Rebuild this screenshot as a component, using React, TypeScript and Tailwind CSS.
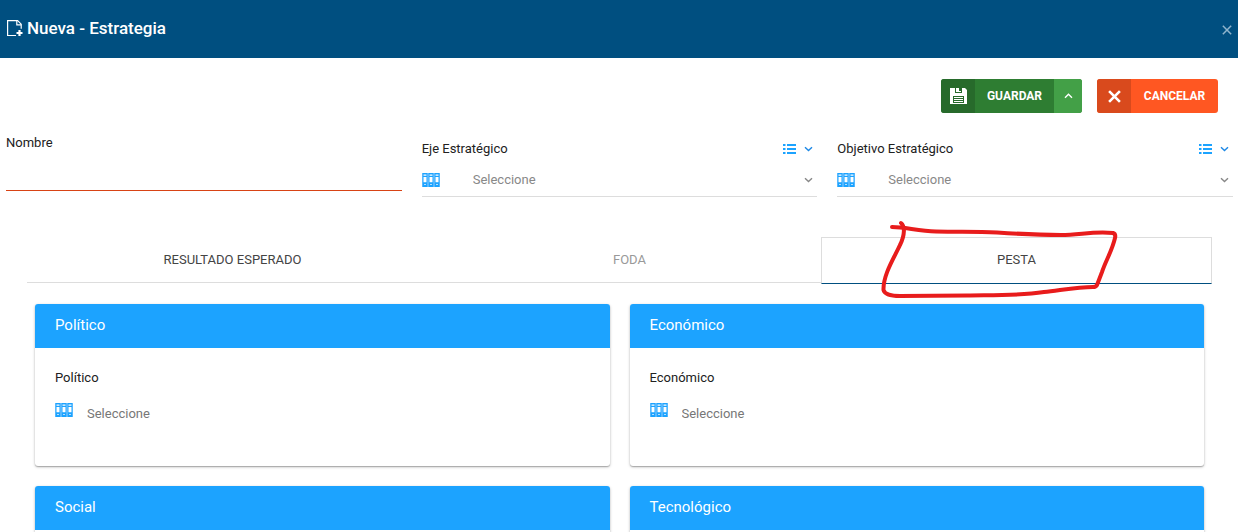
import type { ReactNode } from "react";

function FilePlusIcon() {
  return (
    <svg width="17" height="17" viewBox="0 0 17 17" fill="none" stroke="white" aria-hidden="true">
      <path d="M9 15.5H.6V.6h10l3.6 3.6v4.6" strokeWidth="1.2" />
      <path d="M9.8.6v4.2h4.4" strokeWidth="1.2" />
      <path d="M12.5 10v6M9.5 13h6" strokeWidth="2.2" />
    </svg>
  );
}

function CloseIcon({ size, width }: { size: number; width: number }) {
  return (
    <svg width={size} height={size} viewBox="0 0 12 12" stroke="currentColor" strokeWidth={width} aria-hidden="true">
      <path d="M1 1l10 10M11 1L1 11" />
    </svg>
  );
}

function SaveIcon() {
  return (
    <svg width="17" height="16" viewBox="0 0 17 16" aria-hidden="true">
      <path fillRule="evenodd" fill="white" d="M0 0h15l2 2v14H0zM5 0v5h7V0zM3 8v7h11V8z" />
      <path fill="white" d="M6 0h3v4H6zM9 3h2v1H9zM4 9h9v1H4zM4 11h9v1H4zM4 13h9v1H4z" />
    </svg>
  );
}

function Chevron({ up = false }: { up?: boolean }) {
  return (
    <svg width="9" height="6" viewBox="0 0 9 6" fill="none" stroke="currentColor" strokeWidth="1.4" aria-hidden="true">
      <path d={up ? "M1 4.7l3.5-3.4L8 4.7" : "M1 1.2l3.5 3.4L8 1.2"} />
    </svg>
  );
}

function ListIcon() {
  return (
    <svg width="13" height="10" viewBox="0 0 13 10" fill="currentColor" aria-hidden="true">
      <path d="M0 0h2.5v2H0zM4 0h9v2H4zM0 4h2.5v2H0zM4 4h9v2H4zM0 8h2.5v2H0zM4 8h9v2H4z" />
    </svg>
  );
}

function BindersIcon() {
  return (
    <svg width="18" height="14" viewBox="0 0 18 14" className="shrink-0" aria-hidden="true">
      {[0, 6, 12].map((x) => (
        <g key={x} transform={`translate(${x} 0)`}>
          <rect width="6" height="14" fill="#7cc7ff" />
          <path fill="#1ca3ff" d="M.6 0h4.8v14H.6z" />
          <path fill="white" d="M1.5 1.5h3v1.3h-3zM1.5 4h3v5.2h-3z" />
          <path fill="#b5dfff" d="M2 11h2v1H2z" />
        </g>
      ))}
    </svg>
  );
}

function SelectField({ id, label }: { id: string; label: string }) {
  return (
    <div>
      <div className="flex h-8 items-center justify-between">
        <label htmlFor={id}>{label}</label>
        <div className="flex items-center gap-2 pr-1 text-[#1ca3ff]">
          <button type="button" aria-label={`Listado de ${label}`}>
            <ListIcon />
          </button>
          <button type="button" aria-label={`Opciones de ${label}`} className="text-[#1e88e5]">
            <Chevron />
          </button>
        </div>
      </div>
      <div className="relative flex h-8 items-center border-b border-[#dddddd] pb-[2px]">
        <BindersIcon />
        <select id={id} className="h-7 min-w-0 flex-1 appearance-none bg-transparent pl-[33px] text-[#888888] outline-none">
          <option>Seleccione</option>
        </select>
        <span className="pointer-events-none absolute right-1 text-[#888888]">
          <Chevron />
        </span>
      </div>
    </div>
  );
}

function Card({ title }: { title: string }) {
  return (
    <section className="overflow-hidden rounded-[3px] bg-white shadow-[0_1px_3px_rgba(0,0,0,0.25),0_1px_1px_rgba(0,0,0,0.2)]">
      <h2 className="h-11 bg-[#1ca3ff] px-5 text-[15px] leading-[42px] font-normal text-white">{title}</h2>
      <div className="flex h-[118px] flex-col px-5 pt-5">
        <label htmlFor={title} className="leading-5">
          {title}
        </label>
        <div className="mt-[15px] flex items-start gap-[14px]">
          <BindersIcon />
          <input
            id={title}
            placeholder="Seleccione"
            className="h-5 min-w-0 flex-1 bg-transparent outline-none placeholder:text-[#777777]"
          />
        </div>
      </div>
    </section>
  );
}

function Tab({ className, children, selected = false }: { className: string; children: ReactNode; selected?: boolean }) {
  return (
    <button type="button" role="tab" aria-selected={selected} className={className}>
      {children}
    </button>
  );
}

export default function App() {
  return (
    <div className="flex h-screen flex-col overflow-hidden bg-white font-['Roboto',sans-serif] text-[13px] text-[#444444]">
      <header className="flex h-[58px] shrink-0 items-center justify-between bg-[#004f80] pr-[6px] pb-[2px] pl-[7px] text-white">
        <h1 className="flex items-center gap-[3px] text-[17px] leading-6 font-medium">
          <FilePlusIcon />
          Nueva - Estrategia
        </h1>
        <button type="button" aria-label="Cerrar" className="pt-1 text-[#8fb4cc]">
          <CloseIcon size={10} width={1.8} />
        </button>
      </header>

      <main className="min-h-0 flex-1">
        <div className="flex justify-end gap-[15px] pt-[21px] pr-5 text-[12px] font-bold text-white">
          <div className="flex h-[34px] overflow-hidden rounded-[3px] bg-[#2e7d32]">
            <button type="button" className="flex">
              <span className="flex h-[34px] w-[34px] items-center justify-center bg-[#276a2b]">
                <SaveIcon />
              </span>
              <span className="w-[79px] text-center leading-[34px]">GUARDAR</span>
            </button>
            <button type="button" aria-label="Más opciones" className="flex w-7 items-center justify-center bg-[#43a047]">
              <Chevron up />
            </button>
          </div>
          <button type="button" className="flex h-[34px] overflow-hidden rounded-[3px] bg-[#ff5722]">
            <span className="flex h-[34px] w-[34px] items-center justify-center bg-[#d94a1d]">
              <CloseIcon size={13} width={2.4} />
            </span>
            <span className="w-[87px] text-center leading-[34px]">CANCELAR</span>
          </button>
        </div>

        <form className="grid grid-cols-3 items-start gap-5 pt-5 pr-[5px] pl-[6px] text-[#212121]">
          <div className="flex flex-col">
            <label htmlFor="nombre" className="leading-5">
              Nombre
            </label>
            <input id="nombre" className="h-[38px] w-full border-b border-[#d84315] bg-transparent outline-none" />
          </div>
          <SelectField id="eje" label="Eje Estratégico" />
          <SelectField id="objetivo" label="Objetivo Estratégico" />
        </form>

        <div role="tablist" className="mt-10 mr-[26px] ml-[27px] flex h-[47px] items-start">
          <Tab className="h-[46px] flex-[411] border-b border-[#dddddd]">RESULTADO ESPERADO</Tab>
          <Tab className="h-[46px] flex-[383] border-b border-[#dddddd] text-[#999999]">FODA</Tab>
          <Tab
            selected
            className="relative h-[47px] flex-[389] border border-[#dddddd] border-b-[#004f80] pb-[2px]"
          >
            PESTA
            <svg
              className="pointer-events-none absolute top-[-18px] left-[54px]"
              width="250"
              height="86"
              viewBox="876 220 250 86"
              fill="none"
              stroke="#e81c1c"
              strokeWidth="4"
              strokeLinecap="round"
              strokeLinejoin="round"
              aria-hidden="true"
            >
              <path d="M892 227C905 227 918 231 936 231.500C956 232 975 231 997 232.500C1020 234 1045 235 1061 235C1080 235 1093 231 1113 233Q1116 234 1115 238C1112 251 1106 260 1102 272L1097 285Q1096 287 1093 287C1078 287 1062 290 1044 292C1018 296 990 295 967 295.500L900 296Q885 296 883.500 290C883 275 894 258 900 245C905 235 905 226 901 223" />
            </svg>
          </Tab>
        </div>

        <div className="grid grid-cols-2 gap-5 pt-5 pr-[34px] pl-[35px] text-[#212121]">
          <Card title="Político" />
          <Card title="Económico" />
          <Card title="Social" />
          <Card title="Tecnológico" />
        </div>
      </main>
    </div>
  );
}
